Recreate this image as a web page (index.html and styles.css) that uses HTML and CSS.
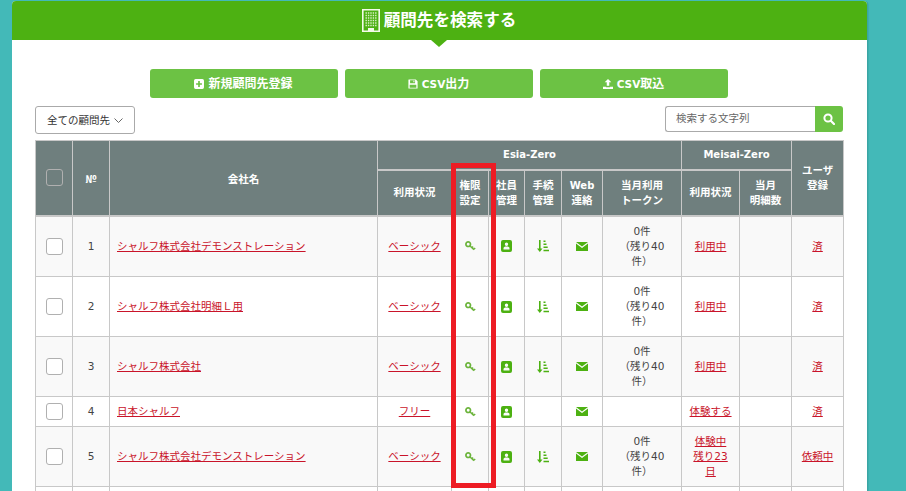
FILE: index.html
```html
<!DOCTYPE html>
<html lang="ja">
<head>
<meta charset="utf-8">
<title>顧問先を検索する</title>
<link rel="stylesheet" href="styles.css">
</head>
<body>
<svg class="defs" aria-hidden="true">
  <symbol id="i-key" viewBox="0 0 11 10"><circle cx="3.200" cy="3.200" r="2.300" fill="none" stroke="currentColor" stroke-width="1.700"/><path d="M4.800 4.800L9 8.600M7 6.700l1.200-1.100M8.800 8.300l1.400-1.300" fill="none" stroke="currentColor" stroke-width="1.500"/></symbol>
  <symbol id="i-card" viewBox="0 0 11 12"><path d="M2 0h7a2 2 0 0 1 2 2v8a2 2 0 0 1-2 2H2a2 2 0 0 1-2-2V2a2 2 0 0 1 2-2zm3.500 2.600a1.700 1.700 0 1 0 0 3.400 1.700 1.700 0 0 0 0-3.400zM2.500 9.400h6V8.300C8.500 7 7.500 6.500 5.500 6.500S2.500 7 2.500 8.300z" fill-rule="evenodd"/></symbol>
  <symbol id="i-sort" viewBox="0 0 12 12"><path d="M2 0h1.600v8.400H5.500L2.800 12 0 8.400h2zM6.500 0.500h2v1.500h-2zM6.500 3.500h3v1.500h-3zM6.500 6.500h4.200V8H6.500zM6.500 9.700H12v1.500H6.500z"/></symbol>
  <symbol id="i-mail" viewBox="0 0 12 9"><path d="M0 0h12L6 4.400zM0 1.600l6 4.400 6-4.400V9H0z"/></symbol>
</svg>

<main class="card">
  <header class="card-head">
    <svg class="building" viewBox="0 0 18 23" aria-hidden="true"><path d="M.8.800h16.400v21.400H.8z" fill="none" stroke="currentColor" stroke-width="1.600"/><path d="M3.500 4h11M3.500 6.500h11M3.500 9h11M3.500 11.500h11M3.500 14h11M3.500 16.500h11" fill="none" stroke="currentColor" stroke-width="1.400" stroke-dasharray="1.400 1" opacity=".85"/><path d="M6 19h6v3.500H6z" fill="currentColor"/></svg>
    <h1 class="card-title">顧問先を検索する</h1>
  </header>

  <div class="card-body">
    <div class="actions">
      <a class="action"><svg class="action-icon" viewBox="0 0 12 12" aria-hidden="true"><path d="M2 0h8a2 2 0 0 1 2 2v8a2 2 0 0 1-2 2H2a2 2 0 0 1-2-2V2a2 2 0 0 1 2-2zm3 2.500V5H2.500v2H5v2.500h2V7h2.500V5H7V2.500z" fill-rule="evenodd"/></svg>新規顧問先登録</a>
      <a class="action"><svg class="action-icon" viewBox="0 0 12 12" aria-hidden="true"><path d="M1 .5h8.300L11.500 2.700V11a.5.5 0 0 1-.5.5H1a.5.5 0 0 1-.5-.5V1A.5.5 0 0 1 1 .5zm1.500 1v3.500h6V1.500zM6.500 2h1.200v2H6.500zM2 7v3.500h8V7z" fill-rule="evenodd"/></svg><span class="latin">CSV</span>出力</a>
      <a class="action"><svg class="action-icon" viewBox="0 0 12 12" aria-hidden="true"><path d="M6 0l4 4H7.500v4h-3V4H2zM0 9.300h3.500v.7h5v-.7H12V12H0z"/></svg><span class="latin">CSV</span>取込</a>
    </div>

    <div class="toolbar">
      <button class="filter" type="button">全ての顧問先<svg class="chevron" viewBox="0 0 9 5" aria-hidden="true"><path d="M.5.500l4 4 4-4" fill="none" stroke="currentColor"/></svg></button>
      <form class="search">
        <input class="search-input" type="text" placeholder="検索する文字列">
        <button class="search-btn" type="button" aria-label="検索"><svg viewBox="0 0 12 12" aria-hidden="true"><circle cx="5" cy="5" r="3.600" fill="none" stroke="currentColor" stroke-width="2"/><path d="M7.800 7.800L11 11" stroke="currentColor" stroke-width="2.200" stroke-linecap="round"/></svg></button>
      </form>
    </div>

    <table class="clients">
      <colgroup>
        <col class="c37"><col class="c37"><col class="c268"><col class="c74"><col class="c37"><col class="c36"><col class="c37"><col class="c41"><col class="c79"><col class="c58"><col class="c52"><col class="c52">
      </colgroup>
      <thead>
        <tr class="head-a">
          <th rowspan="2"><input class="check check-head" type="checkbox" aria-label="全選択"></th>
          <th rowspan="2" class="no">№</th>
          <th rowspan="2" class="th-name">会社名</th>
          <th colspan="6"><span class="th-latin">Esia-Zero</span></th>
          <th colspan="2"><span class="th-latin">Meisai-Zero</span></th>
          <th rowspan="2">ユーザ<br>登録</th>
        </tr>
        <tr class="head-b">
          <th>利用状況</th><th>権限<br>設定</th><th>社員<br>管理</th><th>手続<br>管理</th><th><span class="th-latin">Web</span><br>連絡</th><th>当月利用<br>トークン</th><th>利用状況</th><th>当月<br>明細数</th>
        </tr>
      </thead>
      <tbody>
        <tr class="tall first">
          <td><input class="check" type="checkbox" aria-label="選択"></td><td>1</td>
          <td class="name"><a>シャルフ株式会社デモンストレーション</a></td><td><a>ベーシック</a></td>
          <td><svg class="ico key"><use href="#i-key"/></svg></td><td><svg class="ico card-ico"><use href="#i-card"/></svg></td><td><svg class="ico sort"><use href="#i-sort"/></svg></td><td><svg class="ico mail"><use href="#i-mail"/></svg></td>
          <td class="token">0件<br>（残り40件）</td><td><a>利用中</a></td><td></td><td><a>済</a></td>
        </tr>
        <tr class="tall">
          <td><input class="check" type="checkbox" aria-label="選択"></td><td>2</td>
          <td class="name"><a>シャルフ株式会社明細Ｌ用</a></td><td><a>ベーシック</a></td>
          <td><svg class="ico key"><use href="#i-key"/></svg></td><td><svg class="ico card-ico"><use href="#i-card"/></svg></td><td><svg class="ico sort"><use href="#i-sort"/></svg></td><td><svg class="ico mail"><use href="#i-mail"/></svg></td>
          <td class="token">0件<br>（残り40件）</td><td><a>利用中</a></td><td></td><td><a>済</a></td>
        </tr>
        <tr class="tall">
          <td><input class="check" type="checkbox" aria-label="選択"></td><td>3</td>
          <td class="name"><a>シャルフ株式会社</a></td><td><a>ベーシック</a></td>
          <td><svg class="ico key"><use href="#i-key"/></svg></td><td><svg class="ico card-ico"><use href="#i-card"/></svg></td><td><svg class="ico sort"><use href="#i-sort"/></svg></td><td><svg class="ico mail"><use href="#i-mail"/></svg></td>
          <td class="token">0件<br>（残り40件）</td><td><a>利用中</a></td><td></td><td><a>済</a></td>
        </tr>
        <tr class="short">
          <td><input class="check" type="checkbox" aria-label="選択"></td><td>4</td>
          <td class="name"><a>日本シャルフ</a></td><td><a>フリー</a></td>
          <td><svg class="ico key"><use href="#i-key"/></svg></td><td><svg class="ico card-ico"><use href="#i-card"/></svg></td><td></td><td><svg class="ico mail"><use href="#i-mail"/></svg></td>
          <td class="token"></td><td><a>体験する</a></td><td></td><td><a>済</a></td>
        </tr>
        <tr class="tall">
          <td><input class="check" type="checkbox" aria-label="選択"></td><td>5</td>
          <td class="name"><a>シャルフ株式会社デモンストレーション</a></td><td><a>ベーシック</a></td>
          <td><svg class="ico key"><use href="#i-key"/></svg></td><td><svg class="ico card-ico"><use href="#i-card"/></svg></td><td><svg class="ico sort"><use href="#i-sort"/></svg></td><td><svg class="ico mail"><use href="#i-mail"/></svg></td>
          <td class="token">0件<br>（残り40件）</td><td><a>体験中<br>残り23日</a></td><td></td><td><a>依頼中</a></td>
        </tr>
        <tr class="tall">
          <td></td><td></td><td></td><td></td><td></td><td></td><td></td><td></td><td></td><td></td><td></td><td></td>
        </tr>
      </tbody>
    </table>
  </div>
</main>

<div class="highlight"></div>
</body>
</html>
```

FILE: styles.css
```css
* { box-sizing: border-box; }

html, body {
  height: 491px;
  overflow: hidden;
}

body {
  position: relative;
  margin: 0;
  padding-top: 1px;
  background: #43b9b8;
  color: #444;
  font: 10.5px/15px "DejaVu Sans", "Noto Sans CJK JP", sans-serif;
}

.defs { display: none; }

.card {
  width: 855px;
  height: 600px;
  margin-left: 12px;
  background: #fff;
  border-radius: 4px 4px 0 0;
  box-shadow: 1.5px 0 0 #3aa5a4;
}

.card-head {
  position: relative;
  display: flex;
  align-items: center;
  justify-content: center;
  gap: 4px;
  height: 39px;
  padding-right: 1px;
  background: #4db112;
  border-radius: 4px 4px 0 0;
  color: #fff;
}

.card-head::after {
  content: "";
  position: absolute;
  left: 419px;
  top: 39px;
  border: solid transparent;
  border-width: 7px 8px 0;
  border-top-color: #4db112;
}

.building { width: 18px; height: 23px; color: #f4fbe9; }

.card-title {
  margin: 0;
  font-size: 16.6px;
  font-weight: 700;
  line-height: 24px;
}

.card-body { padding: 29px 24px 0 23px; }

.actions {
  display: flex;
  justify-content: center;
  gap: 7px;
  margin-right: 1px;
}

.action {
  display: flex;
  align-items: center;
  justify-content: center;
  gap: 4px;
  width: 188px;
  height: 29px;
  padding-top: 1px;
  background: #6cc244;
  border-radius: 3px;
  color: #fff;
  font-weight: 700;
  font-size: 12px;
}

.latin { font-size: 10.5px; margin-right: -4px; }

.action-icon { width: 10px; height: 10px; fill: currentColor; }

.toolbar {
  display: flex;
  justify-content: space-between;
  align-items: flex-start;
  margin-top: 8px;
}

.filter {
  display: flex;
  align-items: center;
  gap: 4px;
  width: 100px;
  height: 28px;
  padding: 0 0 0 11px;
  background: #fff;
  border: 1px solid #aaa;
  border-radius: 3px;
  color: #333;
  font: inherit;
}

.chevron { width: 9px; height: 5px; color: #666; }

.search { display: flex; width: 178px; height: 26px; }

.search-input {
  flex: 1;
  min-width: 0;
  padding: 0 0 2px 10px;
  border: 1px solid #aaa;
  border-right: 0;
  border-radius: 3px 0 0 3px;
  font: inherit;
  outline: 0;
}

.search-input::placeholder { color: #666; opacity: 1; }

.search-btn {
  display: flex;
  align-items: center;
  justify-content: center;
  width: 28px;
  padding: 0;
  background: #6cc244;
  border: 0;
  border-radius: 0 3px 3px 0;
  color: #fff;
}

.search-btn svg { width: 12px; height: 12px; }

.clients {
  width: 808px;
  margin-top: 6px;
  table-layout: fixed;
  border-collapse: collapse;
}

.c37 { width: 37px; }
.c268 { width: 268px; }
.c74 { width: 74px; }
.c36 { width: 36px; }
.c41 { width: 41px; }
.c79 { width: 79px; }
.c58 { width: 58px; }
.c52 { width: 52px; }

.clients th,
.clients td {
  padding: 0 7px;
  border: 1px solid #c8c8c8;
  text-align: center;
  vertical-align: middle;
}

.clients th {
  padding: 0;
  background: #6f7f7e;
  color: #fff;
  font-weight: 700;
}

.clients .no { padding-top: 2px; font-family: "Noto Sans CJK JP", sans-serif; }
.clients .th-name { padding-top: 3px; }
.th-latin { font-size: 10px; }

.head-a { height: 29px; }
.head-b { height: 46px; }
.head-b th { border-top-width: 2px; border-bottom-width: 2px; }
.clients thead tr:first-child th[rowspan] { border-bottom-width: 2px; }

.tall td { height: 60px; }
.first td { height: 61px; }
.short td { height: 30px; }
.clients tbody tr:nth-child(odd) td { background: #f9f9f9; }

.clients .name { text-align: left; }
.clients .token { padding: 0 11px; }

.clients a {
  color: #c9142a;
  text-decoration: underline;
}

.check {
  display: block;
  width: 17px;
  height: 17px;
  margin: 0 auto;
  appearance: none;
  background: #fff;
  border: 1px solid #b0b0b0;
  border-radius: 3px;
}

.check-head { background: transparent; }

.ico { display: block; margin: 0 auto; }
.key { width: 11px; height: 10px; color: #6cb43c; }
.card-ico { width: 11px; height: 12px; fill: #4db112; }
.sort { width: 12px; height: 12px; fill: #4db112; }
.mail { width: 12px; height: 9px; fill: #4db112; }

.highlight {
  position: absolute;
  left: 451px;
  top: 163px;
  width: 45px;
  height: 325px;
  border: 5px solid #ed1c24;
}
```
